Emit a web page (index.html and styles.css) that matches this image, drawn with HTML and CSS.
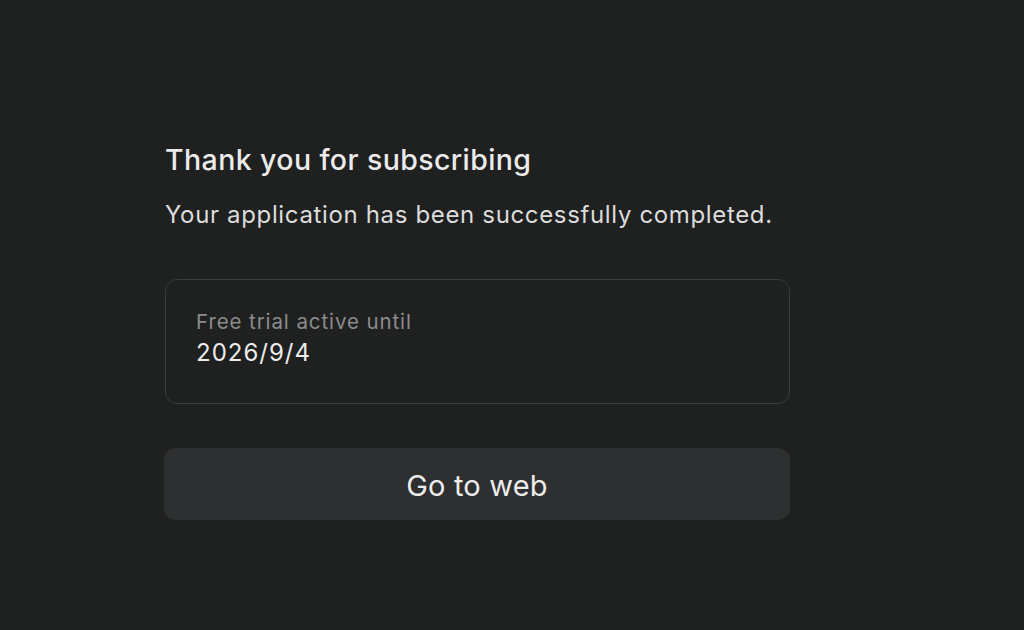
FILE: index.html
```html
<!DOCTYPE html>
<html>
<head>
<meta charset="utf-8">
<link rel="stylesheet" href="styles.css">
</head>
<body>
<main class="page">
  <section class="panel">
    <h1 class="title">Thank you for subscribing</h1>
    <p class="subtitle">Your application has been successfully completed.</p>
    <div class="trial-card">
      <div class="trial-label">Free trial active until</div>
      <div class="trial-date">2026/9/4</div>
    </div>
    <button class="web-btn" type="button">Go to web</button>
  </section>
</main>
</body>
</html>
```

FILE: styles.css
```css
html, body {
  margin: 0;
  padding: 0;
  background: #1f2020;
}
body {
  font-family: "Inter", "Liberation Sans", Arial, sans-serif;
  color: #e8e8e8;
  width: 1024px;
  height: 630px;
  overflow: hidden;
}
.page {
  padding: 143px 0 0 165px;
}
.panel {
  width: 625px;
  display: flex;
  flex-direction: column;
}
.title {
  margin: 0;
  font-size: 28.5px;
  font-weight: 500;
  line-height: 34px;
  letter-spacing: 0.4px;
  color: #ebebeb;
}
.subtitle {
  margin: 23px 0 0;
  font-size: 24px;
  line-height: 30px;
  letter-spacing: 0.65px;
  color: #dcdcdc;
}
.trial-card {
  margin-top: 49px;
  border: 1.5px solid #3b3c3c;
  border-radius: 12px;
  padding: 30px 30px 0;
  height: 125px;
  box-sizing: border-box;
}
.trial-label {
  font-size: 20.5px;
  line-height: 24px;
  letter-spacing: 0.9px;
  color: #8b8c8c;
}
.trial-date {
  margin-top: 5px;
  font-size: 24px;
  line-height: 28px;
  letter-spacing: 1px;
  color: #ececec;
}
.web-btn {
  margin-top: 44px;
  height: 72px;
  border: none;
  border-radius: 12px;
  background: #2e2f31;
  color: #ececec;
  font-family: inherit;
  font-size: 29px;
  letter-spacing: 0.2px;
  padding: 3px 0 0;
  width: 626px;
  margin-left: -1px;
}
```
